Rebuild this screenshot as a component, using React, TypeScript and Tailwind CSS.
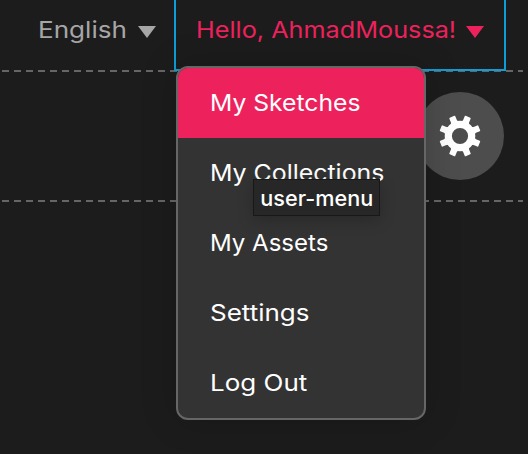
const items = [
  { label: "My Sketches", fit: "scale-x-[1.074]" },
  { label: "My Collections", fit: "scale-x-[1.082]" },
  { label: "My Assets", fit: "scale-x-[1.045]" },
  { label: "Settings", fit: "scale-x-[1.13]" },
  { label: "Log Out", fit: "scale-x-[1.13]" },
];

function Caret({ className }: { className: string }) {
  return (
    <svg width="18" height="12" viewBox="0 0 18 12" className={className}>
      <path d="M0 0H18L9 12Z" fill="currentColor" />
    </svg>
  );
}

function Dashes() {
  return (
    <div className="ml-[2px] h-[2px] w-[521px] bg-[repeating-linear-gradient(90deg,#666_0px,#666_7px,transparent_7px,transparent_12px)]" />
  );
}

function Gear() {
  return (
    <svg width="42" height="42" viewBox="-21 -21 42 42" fill="#fff">
      <defs>
        <path id="tooth" d="M-4.2-13L-3.2-16V-20Q-3.2-20.8-2.4-20.8H2.4Q3.2-20.8 3.2-20V-16L4.2-13Z" />
      </defs>
      <circle r="11.7" fill="none" stroke="#fff" strokeWidth="7.2" />
      {[22.5, 67.5, 112.5, 157.5, 202.5, 247.5, 292.5, 337.5].map((a) => (
        <use key={a} href="#tooth" transform={`rotate(${a})`} />
      ))}
    </svg>
  );
}

export default function App() {
  return (
    <div className="relative h-[454px] w-[528px] overflow-hidden bg-[#1c1c1c] font-['Inter',sans-serif] text-[23px] leading-[30px] whitespace-nowrap">
      <header className="flex h-[70px]">
        <div className="flex w-[174px] pt-[15px] pl-[38px] text-[#a6a6a6]">
          <div className="w-[100px]">
            <span className="inline-block origin-left scale-x-[1.135]">English</span>
          </div>
          <Caret className="mt-[11px]" />
        </div>
        <div className="relative z-10 flex h-[71px] w-[332px] border-x-2 border-b-2 border-[#0f9dd7] pt-[15px] pl-[20px] text-[#ed225d]">
          <div className="w-[270px]">
            <span className="inline-block origin-left scale-x-[1.097]">Hello, AhmadMoussa!</span>
          </div>
          <Caret className="mt-[11px]" />
        </div>
      </header>
      <Dashes />
      <div className="flex h-[128px] justify-end pt-[20px] pr-[24px]">
        <button className="flex size-[88px] items-center justify-center rounded-full bg-[#4d4d4d]">
          <Gear />
        </button>
      </div>
      <Dashes />
      <ul className="absolute top-[66px] left-[176px] z-20 w-[250px] overflow-hidden rounded-[12px] border-2 border-[#666] bg-[#333] text-white shadow-[0_0_36px_rgba(0,0,0,0.18)]">
        {items.map((item, i) => (
          <li key={item.label} className={"flex h-[70px] items-center pl-[32px] " + (i === 0 ? "bg-[#ed225d]" : "")}>
            <span className={"inline-block origin-left " + item.fit}>{item.label}</span>
          </li>
        ))}
      </ul>
      <div className="absolute top-[179px] left-[253px] z-30 flex h-[37px] w-[127px] items-center justify-center border border-[#181818] bg-[#272727] pt-[2px] text-[21px] font-medium text-white shadow-[0_4px_16px_rgba(0,0,0,0.22)]">
        <span className="inline-block scale-x-[1.03]">user-menu</span>
      </div>
    </div>
  );
}
